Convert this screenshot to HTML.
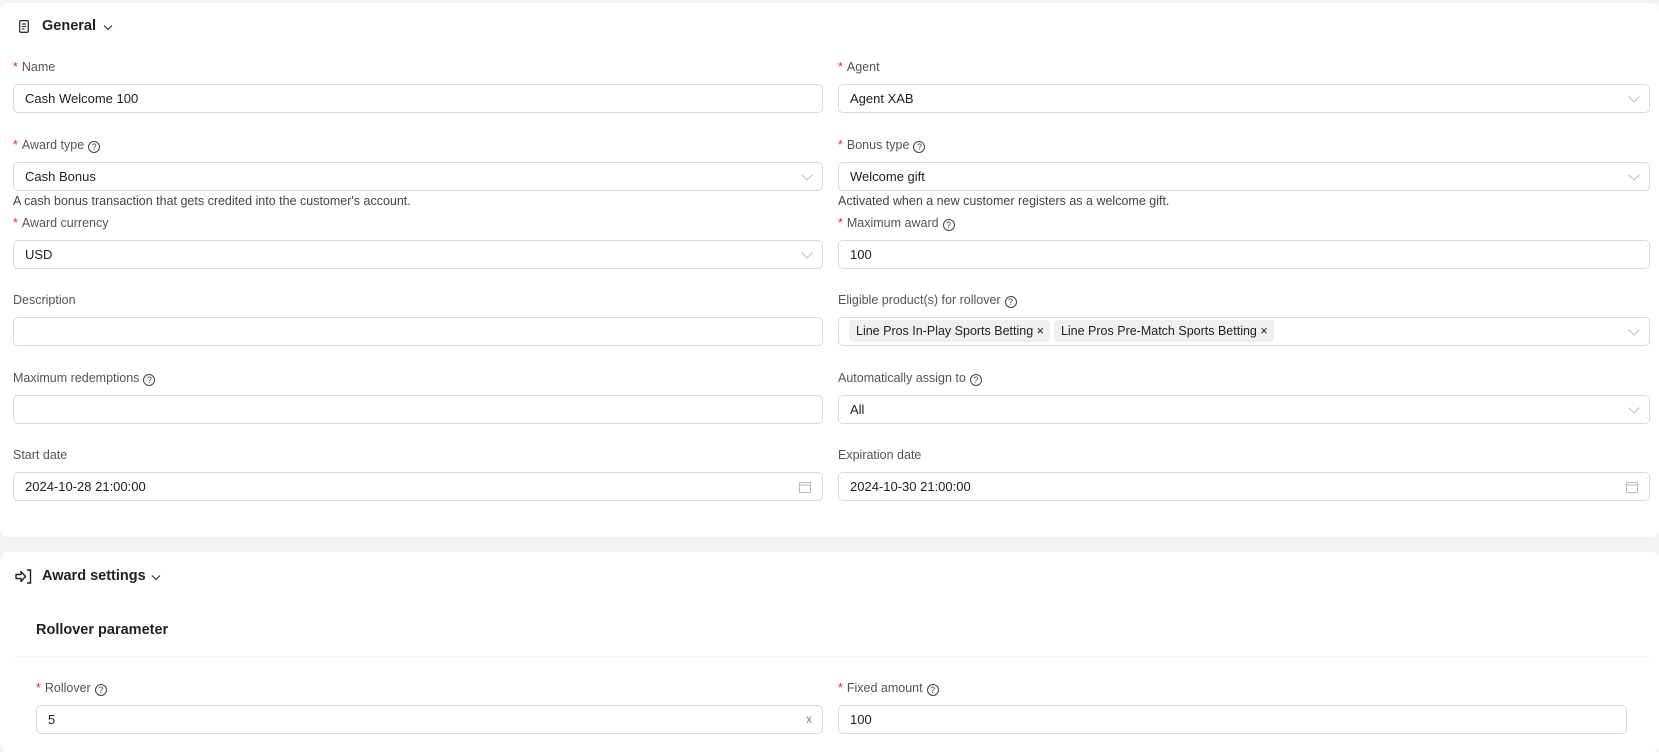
<!DOCTYPE html>
<html><head><meta charset="utf-8"><style>
*{box-sizing:border-box;margin:0;padding:0}
body{width:1659px;height:744px;background:#f3f3f3;font-family:"Liberation Sans",Arial,sans-serif;position:relative;overflow:hidden;color:#222}
.card{position:absolute;left:0;width:1659px;background:#fff;border-radius:8px}
.lbl{position:absolute;font-size:12.5px;color:#555;line-height:16px;white-space:nowrap}
.lbl .s{color:#f5222d;margin-right:4px}
.q{display:inline-block;width:12px;height:12px;border:1.2px solid #444;border-radius:50%;font-size:9px;line-height:10px;text-align:center;color:#444;margin-left:4px;vertical-align:-1px}
.in{position:absolute;height:29px;border:1px solid #d9d9d9;border-radius:5px;background:#fff;font-size:13px;line-height:27px;padding-left:11px;color:#222;white-space:nowrap}
.chev{position:absolute;right:11px;top:8px;width:8px;height:8px;border-right:1px solid #bbb;border-bottom:1px solid #bbb;transform:rotate(45deg)}
.help{position:absolute;font-size:12.5px;color:#444;line-height:16px}
.tag{display:inline-block;background:#f0f0f0;border-radius:3px;height:22px;line-height:22px;padding:0 6px 0 7px;margin-top:2px;font-size:12.5px;margin-right:4px}
.h{position:absolute;font-size:14.5px;font-weight:bold;color:#222}
</style></head><body>
<div class="card" style="top:3px;height:534px"></div>
<div class="card" style="top:552px;height:200px"></div>

<svg style="position:absolute;left:19px;top:20px" width="10" height="13" viewBox="0 0 10 13"><rect x="0.7" y="0.7" width="8.6" height="11.6" rx="1" fill="none" stroke="#333" stroke-width="1.3"/><line x1="3" y1="4" x2="7" y2="4" stroke="#333" stroke-width="1.2"/><line x1="3" y1="6.5" x2="7" y2="6.5" stroke="#333" stroke-width="1.2"/><line x1="3" y1="9" x2="5.5" y2="9" stroke="#333" stroke-width="1.2"/></svg>
<div class="h" style="left:42px;top:18px">General</div>
<svg style="position:absolute;left:103px;top:24px" width="10" height="7"><path d="M1 1.5L5 5.5L9 1.5" fill="none" stroke="#333" stroke-width="1.2"/></svg>

<div class="lbl" style="left:13px;top:59px"><span class="s">*</span>Name</div>
<div class="in" style="left:13px;top:84px;width:810px">Cash Welcome 100</div>
<div class="lbl" style="left:838px;top:59px"><span class="s">*</span>Agent</div>
<div class="in" style="left:838px;top:84px;width:812px">Agent XAB<span class="chev"></span></div>

<div class="lbl" style="left:13px;top:137px"><span class="s">*</span>Award type<span class="q">?</span></div>
<div class="in" style="left:13px;top:162px;width:810px">Cash Bonus<span class="chev"></span></div>
<div class="help" style="left:13px;top:193px">A cash bonus transaction that gets credited into the customer's account.</div>
<div class="lbl" style="left:838px;top:137px"><span class="s">*</span>Bonus type<span class="q">?</span></div>
<div class="in" style="left:838px;top:162px;width:812px">Welcome gift<span class="chev"></span></div>
<div class="help" style="left:838px;top:193px">Activated when a new customer registers as a welcome gift.</div>

<div class="lbl" style="left:13px;top:215px"><span class="s">*</span>Award currency</div>
<div class="in" style="left:13px;top:240px;width:810px">USD<span class="chev"></span></div>
<div class="lbl" style="left:838px;top:215px"><span class="s">*</span>Maximum award<span class="q">?</span></div>
<div class="in" style="left:838px;top:240px;width:812px">100</div>

<div class="lbl" style="left:13px;top:292px">Description</div>
<div class="in" style="left:13px;top:317px;width:810px"></div>
<div class="lbl" style="left:838px;top:292px">Eligible product(s) for rollover<span class="q">?</span></div>
<div class="in" style="left:838px;top:317px;width:812px;padding-left:10px;line-height:normal"><span class="tag">Line Pros In-Play Sports Betting ×</span><span class="tag">Line Pros Pre-Match Sports Betting ×</span><span class="chev"></span></div>

<div class="lbl" style="left:13px;top:370px">Maximum redemptions<span class="q">?</span></div>
<div class="in" style="left:13px;top:395px;width:810px"></div>
<div class="lbl" style="left:838px;top:370px">Automatically assign to<span class="q">?</span></div>
<div class="in" style="left:838px;top:395px;width:812px">All<span class="chev"></span></div>

<div class="lbl" style="left:13px;top:447px">Start date</div>
<div class="in" style="left:13px;top:472px;width:810px">2024-10-28 21:00:00
<svg style="position:absolute;right:11px;top:8px" width="12" height="12"><rect x="0.5" y="1.5" width="11" height="10" fill="none" stroke="#bbb"/><line x1="0.5" y1="4" x2="11.5" y2="4" stroke="#bbb"/></svg></div>
<div class="lbl" style="left:838px;top:447px">Expiration date</div>
<div class="in" style="left:838px;top:472px;width:812px">2024-10-30 21:00:00
<svg style="position:absolute;right:11px;top:8px" width="12" height="12"><rect x="0.5" y="1.5" width="11" height="10" fill="none" stroke="#bbb"/><line x1="0.5" y1="4" x2="11.5" y2="4" stroke="#bbb"/></svg></div>

<svg style="position:absolute;left:15px;top:569px" width="18" height="15" viewBox="0 0 18 15"><path d="M1 5.5H6V2.5L10.5 7.5L6 12.5V9.5H1Z" fill="none" stroke="#222" stroke-width="1.4" stroke-linejoin="round"/><path d="M12 1H15.5V14H12" fill="none" stroke="#222" stroke-width="1.4"/></svg>
<div class="h" style="left:42px;top:568px">Award settings</div>
<svg style="position:absolute;left:151px;top:574px" width="10" height="7"><path d="M1 1.5L5 5.5L9 1.5" fill="none" stroke="#333" stroke-width="1.2"/></svg>

<div class="h" style="left:36px;top:622px;font-size:14.5px">Rollover parameter</div>
<div style="position:absolute;left:13px;top:656px;width:1637px;height:1px;background:#f8f8f8"></div>

<div class="lbl" style="left:36px;top:680px"><span class="s">*</span>Rollover<span class="q">?</span></div>
<div class="in" style="left:36px;top:705px;width:787px">5<span style="position:absolute;right:10px;top:0;color:#888;font-size:12px">x</span></div>
<div class="lbl" style="left:838px;top:680px"><span class="s">*</span>Fixed amount<span class="q">?</span></div>
<div class="in" style="left:838px;top:705px;width:789px">100</div>
</body></html>
